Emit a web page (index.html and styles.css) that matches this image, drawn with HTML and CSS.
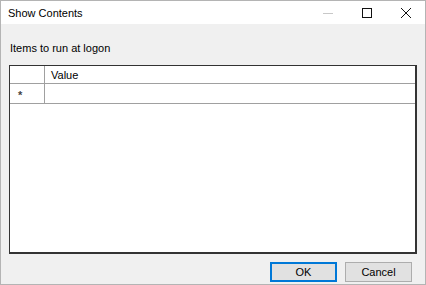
FILE: index.html
```html
<!DOCTYPE html>
<html>
<head>
<meta charset="utf-8">
<link rel="stylesheet" href="styles.css">
</head>
<body>
<div class="window">
  <div class="titlebar">
    <span class="title">Show Contents</span>
    <div class="controls">
      <span class="ctl"><svg width="10" height="10" viewBox="0 0 10 10"><path d="M0 5.5H10" stroke="#c8c8c8" stroke-width="1"/></svg></span>
      <span class="ctl"><svg width="10" height="10" viewBox="0 0 10 10"><rect x="0.5" y="0.5" width="9" height="9" fill="none" stroke="#111" stroke-width="1"/></svg></span>
      <span class="ctl"><svg width="10" height="10" viewBox="0 0 10 10"><path d="M0 0L10 10M10 0L0 10" stroke="#111" stroke-width="1"/></svg></span>
    </div>
  </div>
  <div class="content">
    <div class="label">Items to run at logon</div>
    <div class="grid">
      <div class="row header">
        <div class="cell sel"></div>
        <div class="cell val">Value</div>
      </div>
      <div class="row">
        <div class="cell sel star">*</div>
        <div class="cell val"></div>
      </div>
    </div>
    <div class="buttons">
      <button class="btn default">OK</button>
      <button class="btn">Cancel</button>
    </div>
  </div>
</div>
</body>
</html>
```
FILE: styles.css
```css
html, body {
  margin: 0;
  padding: 0;
}
body {
  width: 426px;
  height: 285px;
  font-family: "Liberation Sans", Arial, sans-serif;
  font-size: 11px;
  color: #000;
}
.window {
  box-sizing: border-box;
  width: 426px;
  height: 285px;
  border: 1px solid #b4b4b4;
  background: #f0f0f0;
  display: flex;
  flex-direction: column;
}
.titlebar {
  height: 23px;
  background: #fff;
  display: flex;
  align-items: center;
  justify-content: space-between;
}
.title {
  padding-left: 7px;
  font-size: 11px;
}
.controls {
  display: flex;
  height: 23px;
}
.ctl {
  width: 39px;
  display: flex;
  align-items: center;
  justify-content: center;
}
.content {
  flex: 1;
  display: flex;
  flex-direction: column;
  padding: 0 8px 0 8px;
}
.label {
  margin-top: 15px;
  padding-left: 1px;
  height: 18px;
  line-height: 18px;
}
.grid {
  margin-top: 8px;
  height: 189px;
  box-sizing: border-box;
  border: 1px solid #333;
  border-bottom-width: 2px;
  border-right-width: 2px;
  background: #fff;
}
.row {
  display: flex;
  height: 19px;
  border-bottom: 1px solid #a0a0a0;
}
.header {
  height: 17px;
}
.cell {
  box-sizing: border-box;
  display: flex;
  align-items: center;
}
.sel {
  width: 35px;
  border-right: 1px solid #a0a0a0;
}
.val {
  flex: 1;
  padding-left: 6px;
}
.star {
  justify-content: flex-start;
  padding-left: 8px;
  padding-top: 3px;
  font-size: 11px;
  font-weight: bold;
  color: #444;
}
.buttons {
  display: flex;
  justify-content: flex-end;
  gap: 8px;
  margin-top: 8px;
  padding-right: 5px;
}
.btn {
  box-sizing: border-box;
  width: 67px;
  height: 20px;
  border: 1px solid #adadad;
  background: #e1e1e1;
  font-family: inherit;
  font-size: 11px;
  padding: 0;
  margin: 0;
  color: #000;
}
.btn.default {
  border: 2px solid #0078d7;
}
```
